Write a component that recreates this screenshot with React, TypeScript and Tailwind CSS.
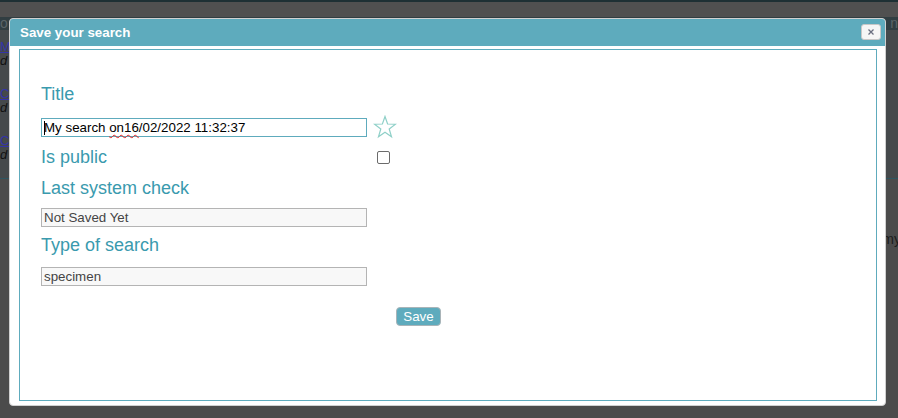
import React from "react";

const LABEL = "text-[18px] leading-[20px] text-[#3a9aae]";

function Star() {
  return (
    <svg width="24" height="24" viewBox="0 0 24 24" className="shrink-0">
      <polygon
        points="12,1.5 14.6,9 22.5,9.2 16.2,14 18.5,21.8 12,17.2 5.5,21.8 7.8,14 1.5,9.2 9.4,9"
        fill="none"
        stroke="#8fd0c8"
        strokeWidth="1.2"
        strokeLinejoin="miter"
      />
    </svg>
  );
}

function ReadOnlyField({ value }: { value: string }) {
  return (
    <div className="w-[326px] h-[19px] border border-[#b4b4b4] bg-[#f8f8f8] pl-[2px] text-[13.33px] leading-[17px] text-[#444]">
      {value}
    </div>
  );
}

export default function App() {
  return (
    <div className="relative w-[898px] h-[418px] overflow-hidden bg-[#4b4b4b] font-['Liberation_Sans',Arial,sans-serif]">
      {/* dimmed page behind */}
      <div className="h-[2px] bg-[#1e3034]" />
      <div className="h-[15px] bg-[#505050]" />
      <div className="h-[13px] bg-[#313e42] flex justify-between text-[14px] leading-[13px] text-[#5a6468]">
        <span>o</span>
        <span>n</span>
      </div>
      <div className="h-[148px] bg-[#45494b] text-[13px] leading-[14px] pt-[10px]">
        <div className="underline text-[#3434a8]">My search</div>
        <div className="italic text-[#111]">d</div>
        <div className="underline text-[#3434a8] mt-[19px]">Created</div>
        <div className="italic text-[#111]">d</div>
        <div className="underline text-[#3434a8] mt-[19px]">Created</div>
        <div className="italic text-[#111]">d</div>
      </div>
      <div className="h-px bg-[#2e5560]" />
      <div className="flex justify-end pt-[50px] text-[14px] text-[#1c1c1c]">
        <span className="mr-[-3px]">search in my</span>
      </div>

      {/* dialog */}
      <div className="absolute left-[9px] top-[18px] w-[877px] h-[388px] bg-white border border-[#d0d0d0] rounded-[4px]">
        <div className="h-[27px] bg-[#5eabbd] rounded-t-[3px] flex items-center justify-between pl-[10px] pr-[4px]">
          <span className="text-[13.33px] font-bold text-white">Save your search</span>
          <button className="w-[20px] h-[16px] mt-[-1px] bg-[#f6f6f6] border border-[#c8c8c8] rounded-[3px] flex items-center justify-center">
            <svg width="6" height="6" viewBox="0 0 6 6">
              <path d="M0.5 0.5L5.5 5.5M5.5 0.5L0.5 5.5" stroke="#6a6f80" strokeWidth="1.3" />
            </svg>
          </button>
        </div>

        <div className="ml-[9px] mt-[3px] w-[858px] h-[352px] border border-[#5eabbd] pl-[21px] pt-[34px]">
          <div className={LABEL}>Title</div>
          <div className="mt-[11px] flex items-center gap-[6px]">
            <div className="relative w-[326px] h-[19px] border border-[#5eabbd] pl-[2px] text-[13.33px] leading-[17px] text-black">
              <span className="absolute left-[2px] top-[2px] w-px h-[14px] bg-black" />
              My search{" "}
              <span className="underline decoration-wavy decoration-[#e02020] decoration-1 underline-offset-2">on16</span>
              /02/2022 11:32:37
            </div>
            <Star />
          </div>

          <div className="mt-[8px] flex items-center">
            <div className={`${LABEL} w-[336px]`}>Is public</div>
            <span className="w-[13px] h-[13px] border border-[#6b6b6b] rounded-[2px] bg-white" />
          </div>

          <div className={`${LABEL} mt-[11px]`}>Last system check</div>
          <div className="mt-[10px]">
            <ReadOnlyField value="Not Saved Yet" />
          </div>

          <div className={`${LABEL} mt-[8px]`}>Type of search</div>
          <div className="mt-[12px]">
            <ReadOnlyField value="specimen" />
          </div>

          <button className="block mt-[21px] ml-[355px] w-[45px] h-[19px] bg-[#5eabbd] border border-[#a9b4b8] rounded-[4px] text-[13.33px] leading-[15px] text-white">
            Save
          </button>
        </div>
      </div>
    </div>
  );
}
